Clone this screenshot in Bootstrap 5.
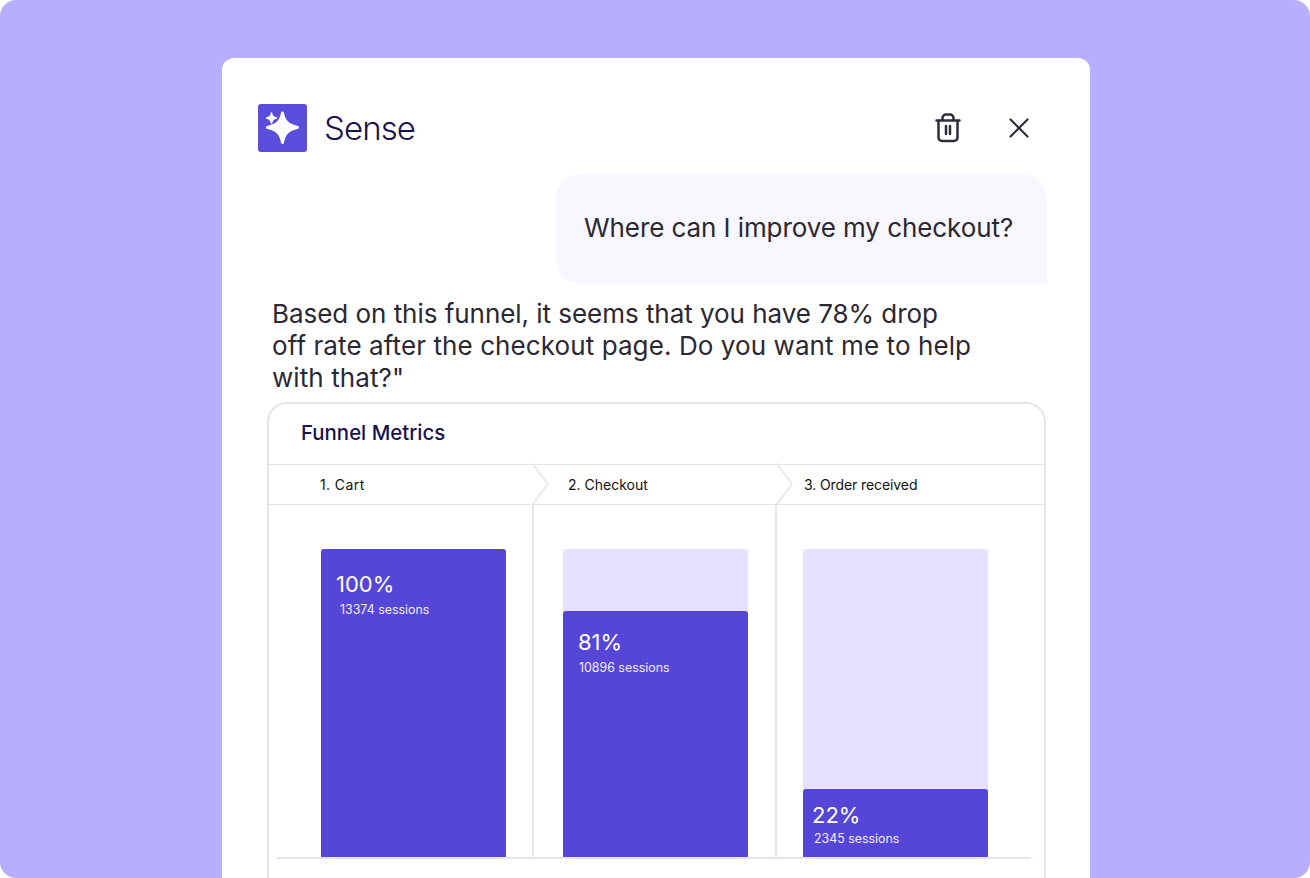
<!DOCTYPE html>
<html lang="en"><head><meta charset="utf-8"><title>Sense</title>
<link href="https://cdn.jsdelivr.net/npm/bootstrap@5.3.0/dist/css/bootstrap.min.css" rel="stylesheet">
<style>
html,body{height:878px;overflow:hidden;background:#fff;margin:0}
body{font-family:Inter,"Liberation Sans",sans-serif;color:#2a2833}
.stage{height:878px;background:#b7aefc;border-radius:16px;padding:58px 0 0 222px;overflow:hidden}
.panel{width:868px;height:900px;background:#fff;border-radius:12px;padding:46px 43px 0 36px}
.logo{width:49px;height:48px;background:#5b4ddb;border-radius:3px}
.brand{font-size:33px;line-height:48px;color:#1b1150;margin-left:17px;letter-spacing:-.9px;font-weight:300;font-family:Inter,"Liberation Sans",sans-serif}
.head-actions{gap:47px;margin-right:17px;color:#2f2d38}
.bubble-row{margin-top:22px}
.bubble{width:491px;height:110px;background:#f8f6ff;border-radius:24px 24px 0 24px;padding:0 0 0 28px;font-size:26px;line-height:108px;color:#2a2833;letter-spacing:-.08px}
.answer{font-size:26px;line-height:32px;margin:14px 0 0 14px;width:730px;color:#2a2833}
.ln1{letter-spacing:-.04px}
.ln2{letter-spacing:.09px}
.metrics{margin:8px 0 0 9px;width:779px;height:560px;border:2px solid #e6e4ea;border-radius:20px 20px 0 0;position:relative}
.metrics-title{height:60px;padding-left:32px;font-size:20.4px;line-height:58px;font-weight:500;color:#1b1150}
.tabs{height:41px;border-top:1.5px solid #e6e4ea;border-bottom:1.5px solid #e6e4ea;font-size:14px;color:#111}
.tab{position:relative;line-height:39px}
.tab1{width:264px;padding-left:51px;letter-spacing:.4px}
.tab2{width:244px;padding-left:35px}
.tab3{flex:1;padding-left:27px;letter-spacing:-.1px}
.chev{position:absolute;right:-17px;top:-2px;width:18px;height:42px;z-index:1}
.cols{height:353px;position:relative}
.colm{position:relative;padding-top:44px}
.col1{width:263px;padding-left:52px}
.col2{width:243px;padding-left:29px;border-left:2px solid #e6e4ea}
.col3{flex:1;padding-left:26px;border-left:2px solid #e6e4ea}
.track{width:185px;height:309px;background:#e7e1ff;border-radius:3px 3px 0 0;display:flex;flex-direction:column;justify-content:flex-end}
.fill{background:#5546d8;border-radius:3px 3px 0 0;color:#fff;padding:20px 0 0 15px}
.pct{font-size:22px;line-height:30px;font-weight:400}
.sess{font-size:12.4px;line-height:18px;padding-left:4px;color:#f0eeff;margin-top:2px}
.col2 .fill{padding-top:16px}
.col2 .sess{padding-left:1px;margin-top:2px}
.col3 .fill{padding:11px 0 0 9px}
.col3 .sess{padding-left:2px;margin-top:0}
.baseline{position:absolute;left:8px;top:352px;width:754px;height:2px;background:#e6e4ea}
</style></head><body>
<div class="stage">
 <div class="panel">
  <div class="d-flex align-items-center">
   <div class="logo d-flex align-items-center justify-content-center flex-shrink-0">
    <svg width="49" height="48" viewBox="0 0 49 48"><path fill="#fff" stroke="#fff" stroke-width="3" stroke-linejoin="round" d="M24.500 9C26 17.500 30 21.500 39.500 23.500 30 25.500 26 29.500 24.500 38.500 23 29.500 19 25.500 9.500 23.500 19 21.500 23 17.500 24.500 9Z"/><path fill="#fff" stroke="#fff" stroke-width="1.500" stroke-linejoin="round" d="M13.500 9C14 12 15 13.300 18.500 14 15 14.700 14 16 13.500 19 13 16 12 14.700 8.500 14 12 13.300 13 12 13.500 9Z"/></svg>
   </div>
   <div class="brand">Sense</div>
   <div class="d-flex align-items-center head-actions ms-auto">
    <svg width="26" height="30" viewBox="0 0 26 30" fill="none" stroke="#2f2d38" stroke-width="2.500" stroke-linecap="round" stroke-linejoin="round"><path d="M1.500 7.500h23M7.500 7V5a3.500 3.500 0 0 1 3.500-3.500h4a3.500 3.500 0 0 1 3.500 3.500V7M3.500 7.500V24.500a3.500 3.500 0 0 0 3.500 3.500h12a3.500 3.500 0 0 0 3.500-3.500V7.500M11 13v8M15 13v8"/></svg>
    <svg width="22" height="22" viewBox="0 0 22 22" fill="none" stroke="#2f2d38" stroke-width="2.200" stroke-linecap="round"><path d="M2.500 2.500l17 17M19.500 2.500l-17 17"/></svg>
   </div>
  </div>
  <div class="bubble-row d-flex justify-content-end"><div class="bubble">Where can I improve my checkout?</div></div>
  <div class="answer"><span class="ln1">Based on this funnel, it seems that you have 78% drop</span><br><span class="ln2">off rate after the checkout page. Do you want me to help<br>with that?"</span></div>
  <div class="metrics">
   <div class="metrics-title">Funnel Metrics</div>
   <div class="tabs d-flex">
    <div class="tab tab1">1. Cart<svg class="chev" viewBox="0 0 18 42" fill="none" stroke="#e6e4ea" stroke-width="1.500"><path d="M0 0l16 21L0 42"/></svg></div>
    <div class="tab tab2">2. Checkout<svg class="chev" viewBox="0 0 18 42" fill="none" stroke="#e6e4ea" stroke-width="1.500"><path d="M0 0l16 21L0 42"/></svg></div>
    <div class="tab tab3">3. Order received</div>
   </div>
   <div class="cols d-flex">
    <div class="colm col1"><div class="track"><div class="fill h-100"><div class="pct">100%</div><div class="sess">13374 sessions</div></div></div></div>
    <div class="colm col2"><div class="track"><div class="fill" style="height:80%"><div class="pct">81%</div><div class="sess">10896 sessions</div></div></div></div>
    <div class="colm col3"><div class="track"><div class="fill" style="height:22.3%"><div class="pct">22%</div><div class="sess">2345 sessions</div></div></div></div>
    <div class="baseline"></div>
   </div>
  </div>
 </div>
</div>
<script src="https://cdn.jsdelivr.net/npm/bootstrap@5.3.0/dist/js/bootstrap.bundle.min.js"></script>
</body></html>
